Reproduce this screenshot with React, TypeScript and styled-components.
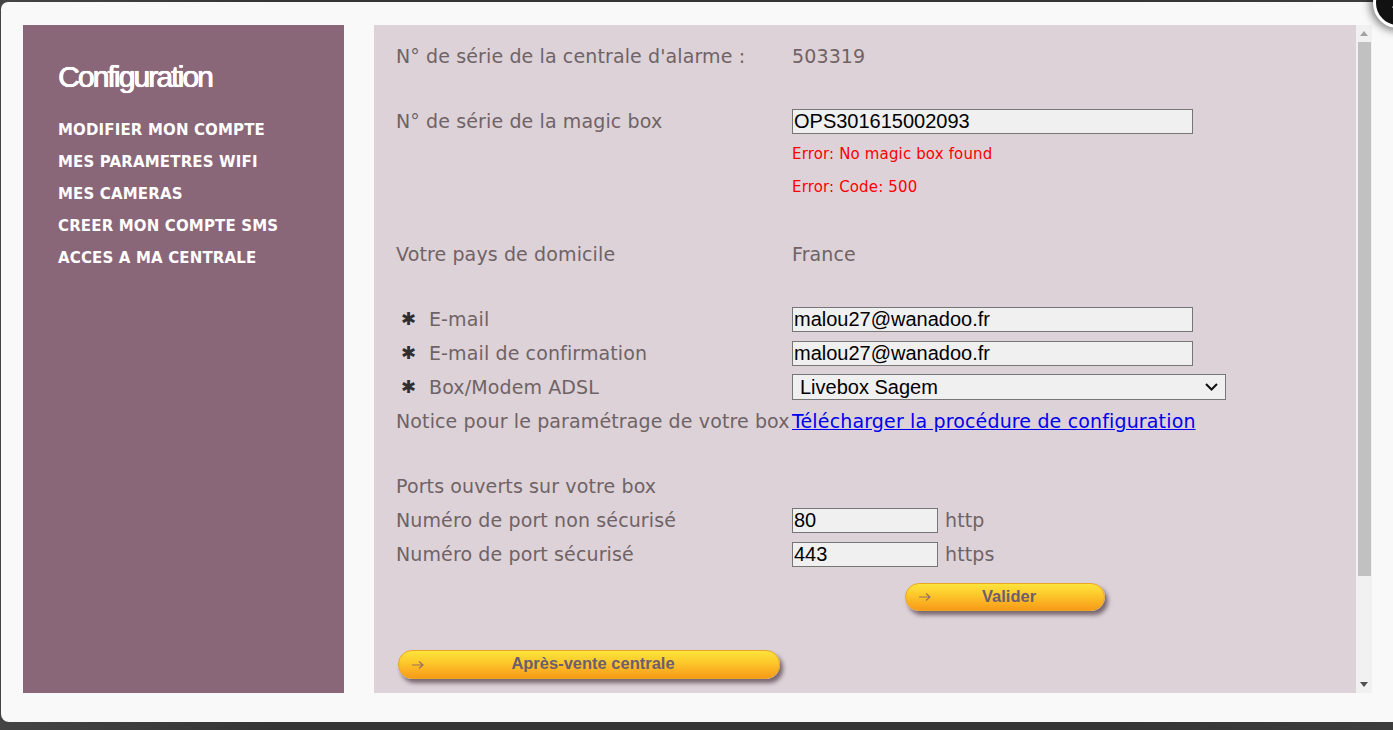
import React from "react";
import styled, { createGlobalStyle } from "styled-components";

const Global = createGlobalStyle`
  html, body {
    margin: 0;
    padding: 0;
    overflow: hidden;
    background: #393939;
  }
  #root {
    height: 730px;
  }
  * { box-sizing: border-box; }
`;

const Stage = styled.div`
  height: 730px;
  padding: 2px 0 0 1px;
  background: linear-gradient(to right, #444 0%, #353535 20%, #353535 80%, #3d3d3d 100%);
`;

const Modal = styled.div`
  position: relative;
  width: 1392px;
  height: 720px;
  background: #f9f9f9;
  border-radius: 7px 0 0 8px;
  padding: 23px 21px 29px 22px;
  display: flex;
  gap: 30px;
`;

const CloseButton = styled.div`
  position: absolute;
  top: -24px;
  right: -30px;
  width: 50px;
  height: 50px;
  border-radius: 50%;
  background: #111;
  border: 3px solid #fff;
  box-shadow: 0 0 8px 3px rgba(0, 0, 0, 0.5);
  display: flex;
  align-items: center;
  justify-content: center;
`;

const Sidebar = styled.nav`
  width: 321px;
  flex: none;
  background: #8a6679;
  padding: 35px 0 0 35px;
`;

const SideTitle = styled.h1`
  margin: 0;
  font-family: "Liberation Sans", Arial, sans-serif;
  font-weight: normal;
  font-size: 30px;
  line-height: 34px;
  letter-spacing: -1.9px;
  color: #fff;
  text-shadow: 0 0 0.8px #fff, 0.6px 0 0 #fff, 0.3px 0.3px 0 #fff;
`;

const MenuList = styled.ul`
  list-style: none;
  margin: 20px 0 0 0;
  padding: 0;
`;

const MenuItem = styled.li`
  font-family: "DejaVu Sans", Verdana, sans-serif;
  font-weight: bold;
  font-size: 15px;
  line-height: 32px;
  letter-spacing: 0.15px;
  color: #fff;
`;

const Panel = styled.main`
  flex: 1;
  display: flex;
  background: #ddd2d8;
  overflow: hidden;
`;

const Viewport = styled.div`
  flex: 1;
  overflow: hidden;
`;

const ScrollBar = styled.div`
  width: 16px;
  flex: none;
  background: #f1f1f1;
  display: flex;
  flex-direction: column;
`;

const ScrollButton = styled.div`
  height: 17px;
  flex: none;
  display: flex;
  align-items: center;
  justify-content: center;
`;

const ScrollThumb = styled.div`
  height: 534px;
  flex: none;
  margin: 0 1px 0 2px;
  background: #c1c1c1;
`;

const ScrollRest = styled.div`
  flex: 1;
`;

const Form = styled.div`
  padding: 14px 0 141px 22px;
  font-family: "DejaVu Sans", Verdana, sans-serif;
  font-size: 19px;
  letter-spacing: 0.12px;
  color: #6f6366;
`;

const Row = styled.div<{ $h?: number }>`
  display: flex;
  align-items: center;
  height: ${(p) => p.$h ?? 34}px;
  line-height: 24px;
`;

const Label = styled.div`
  width: 396px;
  flex: none;
  display: flex;
  align-items: center;
  white-space: nowrap;
`;

const Star = styled.span`
  width: 33px;
  flex: none;
  padding-left: 5px;
  color: #2f2f2f;
  font-size: 18px;
  line-height: 1;
`;

const Value = styled.div`
  display: flex;
  align-items: center;
  gap: 7px;
`;

const Spacer = styled.div<{ $h: number }>`
  height: ${(p) => p.$h}px;
`;

const ErrorLine = styled.div`
  height: 33px;
  line-height: 33px;
  padding-left: 396px;
  font-size: 15px;
  letter-spacing: 0.15px;
  color: #ff0000;
`;

const TextInput = styled.input<{ $w: number }>`
  width: ${(p) => p.$w}px;
  height: 25px;
  border: 1px solid #767676;
  border-radius: 0;
  background: #f0f0f0;
  padding: 0 1px;
  margin: 0;
  font-family: "Liberation Sans", Arial, sans-serif;
  font-size: 20px;
  letter-spacing: 0;
  color: #000;
  outline: none;
`;

const SelectWrap = styled.div`
  position: relative;
  width: 434px;
  height: 26px;
`;

const Select = styled.select`
  appearance: none;
  width: 100%;
  height: 100%;
  border: 1px solid #767676;
  border-radius: 0;
  background: #f0f0f0;
  padding: 0 0 0 7px;
  margin: 0;
  font-family: "Liberation Sans", Arial, sans-serif;
  font-size: 20px;
  color: #000;
  outline: none;
`;

const Chevron = styled.svg`
  position: absolute;
  right: 8px;
  top: 9px;
  pointer-events: none;
`;

const Link = styled.a`
  color: #0000ee;
  text-decoration: underline;
  white-space: nowrap;
  letter-spacing: 0.15px;
`;

const ButtonRow = styled.div<{ $indent: number; $top: number }>`
  display: flex;
  padding-left: ${(p) => p.$indent}px;
  margin-top: ${(p) => p.$top}px;
`;

const PillButton = styled.button<{ $w: number; $h: number }>`
  position: relative;
  width: ${(p) => p.$w}px;
  height: ${(p) => p.$h}px;
  border: 1px solid #eaa624;
  border-radius: 14px;
  background: linear-gradient(to bottom, #fde43c 0%, #fcca2c 40%, #faae20 75%, #f79a18 100%);
  box-shadow: 3px 4px 4px rgba(75, 55, 65, 0.7);
  font-family: "Liberation Sans", Arial, sans-serif;
  font-weight: bold;
  font-size: 16.5px;
  color: #6d5e6e;
  padding: 0 0 2px 8px;
  margin: 0;
  display: flex;
  align-items: center;
  justify-content: center;
  cursor: pointer;
`;

const ArrowIcon = styled.svg`
  position: absolute;
  left: 12px;
  top: 50%;
  margin-top: -5px;
`;

const Arrow = () => (
  <ArrowIcon width="13" height="10" viewBox="0 0 13 10">
    <path d="M1 5 H12 M8 1.5 L12 5 L8 8.5" fill="none" stroke="#9a7060" strokeWidth="1.2" />
  </ArrowIcon>
);

const menu = [
  "MODIFIER MON COMPTE",
  "MES PARAMETRES WIFI",
  "MES CAMERAS",
  "CREER MON COMPTE SMS",
  "ACCES A MA CENTRALE",
];

export default function App() {
  return (
    <>
      <Global />
      <Stage>
        <Modal>
          <Sidebar>
            <SideTitle>Configuration</SideTitle>
            <MenuList>
              {menu.map((m) => (
                <MenuItem key={m}>{m}</MenuItem>
              ))}
            </MenuList>
          </Sidebar>
          <Panel>
            <Viewport>
              <Form>
                <Row>
                  <Label>N° de série de la centrale d'alarme :</Label>
                  <Value>503319</Value>
                </Row>
                <Spacer $h={31} />
                <Row>
                  <Label>N° de série de la magic box</Label>
                  <Value>
                    <TextInput $w={401} defaultValue="OPS301615002093" />
                  </Value>
                </Row>
                <ErrorLine>Error: No magic box found</ErrorLine>
                <ErrorLine>Error: Code: 500</ErrorLine>
                <Spacer $h={33} />
                <Row>
                  <Label>Votre pays de domicile</Label>
                  <Value>France</Value>
                </Row>
                <Spacer $h={31} />
                <Row>
                  <Label>
                    <Star>✱</Star>E-mail
                  </Label>
                  <Value>
                    <TextInput $w={401} defaultValue="malou27@wanadoo.fr" />
                  </Value>
                </Row>
                <Row>
                  <Label>
                    <Star>✱</Star>E-mail de confirmation
                  </Label>
                  <Value>
                    <TextInput $w={401} defaultValue="malou27@wanadoo.fr" />
                  </Value>
                </Row>
                <Row>
                  <Label>
                    <Star>✱</Star>Box/Modem ADSL
                  </Label>
                  <Value>
                    <SelectWrap>
                      <Select defaultValue="sagem">
                        <option value="sagem">Livebox Sagem</option>
                      </Select>
                      <Chevron width="13" height="8" viewBox="0 0 13 8">
                        <path d="M1 1 L6.5 6.5 L12 1" fill="none" stroke="#111" strokeWidth="2" />
                      </Chevron>
                    </SelectWrap>
                  </Value>
                </Row>
                <Row>
                  <Label>Notice pour le paramétrage de votre box</Label>
                  <Value>
                    <Link href="#">Télécharger la procédure de configuration</Link>
                  </Value>
                </Row>
                <Spacer $h={31} />
                <Row>
                  <Label>Ports ouverts sur votre box</Label>
                </Row>
                <Row>
                  <Label>Numéro de port non sécurisé</Label>
                  <Value>
                    <TextInput $w={146} defaultValue="80" />
                    http
                  </Value>
                </Row>
                <Row>
                  <Label>Numéro de port sécurisé</Label>
                  <Value>
                    <TextInput $w={146} defaultValue="443" />
                    https
                  </Value>
                </Row>
                <ButtonRow $indent={509} $top={12}>
                  <PillButton $w={200} $h={28}>
                    <Arrow />
                    Valider
                  </PillButton>
                </ButtonRow>
                <ButtonRow $indent={2} $top={39}>
                  <PillButton $w={382} $h={29}>
                    <Arrow />
                    Après-vente centrale
                  </PillButton>
                </ButtonRow>
              </Form>
            </Viewport>
            <ScrollBar>
              <ScrollButton>
                <svg width="8" height="5" viewBox="0 0 8 5">
                  <path d="M0 5 L4 0 L8 5 Z" fill="#a3a3a3" />
                </svg>
              </ScrollButton>
              <ScrollThumb />
              <ScrollRest />
              <ScrollButton>
                <svg width="8" height="5" viewBox="0 0 8 5">
                  <path d="M0 0 L8 0 L4 5 Z" fill="#505050" />
                </svg>
              </ScrollButton>
            </ScrollBar>
          </Panel>
          <CloseButton>
            <svg width="14" height="14" viewBox="0 0 14 14">
              <path d="M2 2 L12 12 M12 2 L2 12" stroke="#fff" strokeWidth="2.5" />
            </svg>
          </CloseButton>
        </Modal>
      </Stage>
    </>
  );
}
